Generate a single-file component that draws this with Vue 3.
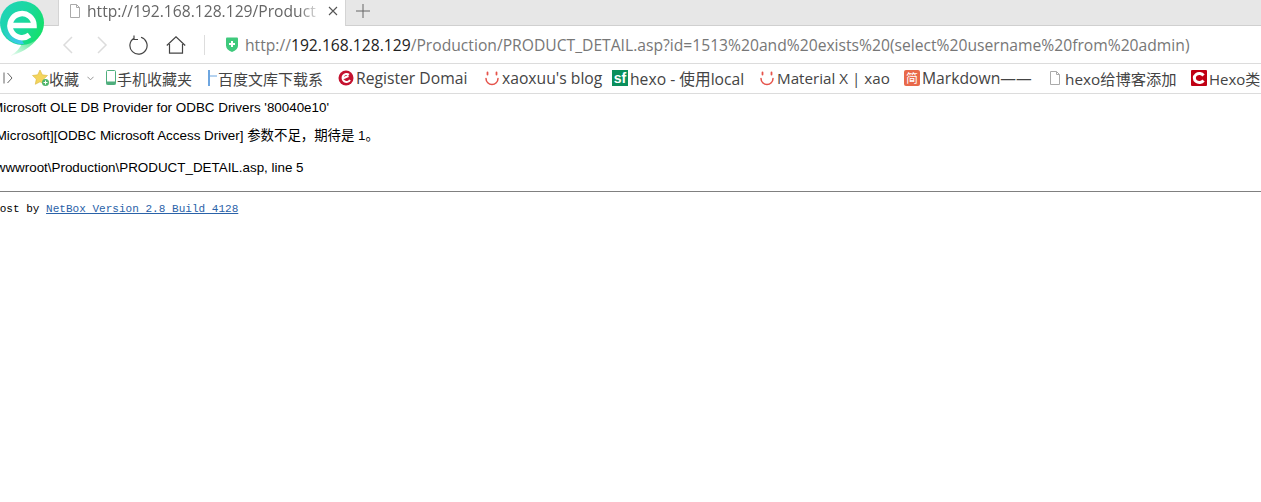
<script setup>
const bookmarks = [
  { id: 'fav', label: '收藏', icon: 'star', width: 74, latin: false },
  { id: 'mobile', label: '手机收藏夹', icon: 'phone', width: 102, latin: false },
  { id: 'baidu', label: '百度文库下载系', icon: 'wk', width: 130, latin: false },
  { id: 'reg', label: 'Register Domai', icon: 'reg', width: 146, latin: true },
  { id: 'blog', label: "xaoxuu's blog", icon: 'smile', width: 128, latin: true },
  { id: 'sf', label: 'hexo - 使用local', icon: 'sf', width: 147, latin: true },
  { id: 'mat', label: 'Material X | xao', icon: 'smile', width: 145, latin: true },
  { id: 'md', label: 'Markdown——', icon: 'jian', width: 145, latin: true },
  { id: 'hexo', label: 'hexo给博客添加', icon: 'doc', width: 142, latin: false },
  { id: 'hx', label: 'Hexo类', icon: 'c', width: 80, latin: false }
]
</script>

<template>
  <div class="page">
    <svg class="logo" viewBox="0 0 46 58" width="46" height="58">
      <defs>
        <linearGradient id="ring" x1="0" y1="0.2" x2="1" y2="0.6">
          <stop offset="0" stop-color="#1fd3b8"/>
          <stop offset="0.55" stop-color="#1ad8a0"/>
          <stop offset="1" stop-color="#14e06a"/>
        </linearGradient>
        <linearGradient id="blue" x1="0" y1="0" x2="0.6" y2="1">
          <stop offset="0" stop-color="#3cc8ea" stop-opacity="0"/>
          <stop offset="1" stop-color="#3cc8ea"/>
        </linearGradient>
        <linearGradient id="tail" x1="1" y1="0" x2="0" y2="1">
          <stop offset="0" stop-color="#16dd6c"/>
          <stop offset="1" stop-color="#16dd6c" stop-opacity="0.05"/>
        </linearGradient>
      </defs>
      <path d="M29 41L41 33 Q32 50 10 56 Q20 50 22 43z" fill="url(#tail)"/>
      <circle cx="22" cy="23" r="22" fill="url(#ring)"/>
      <path d="M3 30 A20 20 0 0 0 24 44 L20 37 Q10 33 8 24z" fill="url(#blue)"/>
      <path d="M11 25.500 H34 A12 12 0 1 0 29.500 35" fill="none" stroke="#fff" stroke-width="5.500"/>
    </svg>
    <div class="tabbar">
      <div class="tab-old"></div>
      <div class="tab">
        <svg class="page-ico" viewBox="0 0 12 14" width="12" height="14"><path d="M1.500.5h6l3 3v10h-9zM7.500.5v3h3" fill="#fff" stroke="#aaa"/></svg>
        <span class="tab-title">http://192.168.128.129/Product</span>
        <svg class="close" viewBox="0 0 10 10" width="10" height="10"><path d="M1 1l8 8M9 1l-8 8" stroke="#555" stroke-width="1.100"/></svg>
      </div>
      <svg class="plus" viewBox="0 0 14 14" width="14" height="14"><path d="M7 0v14M0 7h14" stroke="#666"/></svg>
    </div>
    <div class="navbar">
      <svg class="nav-ico back" viewBox="0 0 12 18" width="12" height="18"><path d="M10 1L2 9l8 8" fill="none" stroke="#dcdcdc" stroke-width="1.500"/></svg>
      <svg class="nav-ico fwd" viewBox="0 0 12 18" width="12" height="18"><path d="M2 1l8 8-8 8" fill="none" stroke="#dcdcdc" stroke-width="1.500"/></svg>
      <svg class="nav-ico reload" viewBox="0 0 20 20" width="20" height="20"><path d="M6 3.200A8.600 8.600 0 1 0 13 2.300M6 .5v4h4" fill="none" stroke="#444" stroke-width="1.200"/></svg>
      <svg class="nav-ico home" viewBox="0 0 20 18" width="20" height="18"><path d="M.8 9.500L10 .8l9.200 8.700M3.500 8v9.200h13V8" fill="none" stroke="#444" stroke-width="1.200"/></svg>
      <span class="sep"></span>
      <svg class="shield" viewBox="0 0 14 16" width="14" height="16"><path d="M1 1.500q0-1 1-1h10q1 0 1 1v7q0 4-6 6.500-6-2.500-6-6.500z" fill="#3ec97c"/><path d="M7 4v6M4 7h6" stroke="#fff" stroke-width="2"/></svg>
      <div class="url"><span class="dim">http://</span><span class="host">192.168.128.129</span><span class="dim">/Production/PRODUCT_DETAIL.asp?id=1513%20and%20exists%20(select%20username%20from%20admin)</span></div>
    </div>
    <div class="bookmarks">
      <svg class="more" viewBox="0 0 10 12" width="10" height="12"><path d="M1 .5v11M4.500 1l4.500 5-4.500 5" fill="none" stroke="#666"/></svg>
      <div v-for="b in bookmarks" :key="b.id" class="bm" :class="[{ latin: b.latin }, 'bm-' + b.id]" :style="{ width: b.width + 'px' }">
        <svg v-if="b.icon === 'star'" class="bi" viewBox="0 0 18 18" width="18" height="18"><path d="M8 1l2.300 4.800 5.200.7-3.800 3.600 1 5.200L8 12.800 3.300 15.300l1-5.200L.5 6.500l5.200-.7z" fill="#f4d55c" stroke="#d9b63c" stroke-width=".6"/><circle cx="13.500" cy="13.500" r="3.500" fill="#4fb56b"/><path d="M13.500 11.500v4M11.500 13.500h4" stroke="#fff"/></svg>
        <svg v-else-if="b.icon === 'phone'" class="bi" viewBox="0 0 10 16" width="10" height="16"><rect x=".5" y=".5" width="9" height="14" rx="1" fill="#fff" stroke="#4fae7d"/><rect x=".5" y="11.500" width="9" height="3" fill="#4fae7d"/></svg>
        <svg v-else-if="b.icon === 'wk'" class="bi" viewBox="0 0 9 16" width="9" height="16"><path d="M1 0v16" stroke="#4a90d9" stroke-width="1.600"/><path d="M2 6h7" stroke="#6aa5e0"/></svg>
        <svg v-else-if="b.icon === 'reg'" class="bi" viewBox="0 0 16 16" width="16" height="16"><circle cx="8" cy="8" r="7.500" fill="#c4122f"/><path d="M4.500 8.500l6-2.500M11 4.800A4 4 0 1 0 12 10" fill="none" stroke="#fff" stroke-width="2"/></svg>
        <svg v-else-if="b.icon === 'smile'" class="bi" viewBox="0 0 16 16" width="16" height="16"><path d="M2 8.500a6 6 0 0 0 12 0" fill="none" stroke="#e5534b" stroke-width="1.500" stroke-linecap="round"/><path d="M3.500 2.500v2M12.500 2.500v2" stroke="#e5534b" stroke-width="1.800" stroke-linecap="round"/></svg>
        <span v-else-if="b.icon === 'sf'" class="bi sf">sf</span>
        <span v-else-if="b.icon === 'jian'" class="bi jian">简</span>
        <svg v-else-if="b.icon === 'doc'" class="bi" viewBox="0 0 12 14" width="12" height="14"><path d="M1.500.5h6l3 3v10h-9zM7.500.5v3h3" fill="#fff" stroke="#aaa"/></svg>
        <svg v-else class="bi" viewBox="0 0 16 16" width="16" height="16"><rect width="16" height="16" rx="1" fill="#c00014"/><path d="M12.500 5.500A5 4.500 0 1 0 12.500 10.500" fill="none" stroke="#fff" stroke-width="3"/></svg>
        <span class="bm-label">{{ b.label }}</span>
        <svg v-if="b.id === 'fav'" class="caret" viewBox="0 0 8 5" width="7" height="5"><path d="M.5.5L4 4 7.500.5" fill="none" stroke="#888"/></svg>
      </div>
    </div>
    <div class="content">
      <p class="l1">Microsoft OLE DB Provider for ODBC Drivers '80040e10'</p>
      <p class="l2">[Microsoft][ODBC Microsoft Access Driver] 参数不足，期待是 1。</p>
      <p class="l3">\wwwroot\Production\PRODUCT_DETAIL.asp, line 5</p>
      <hr class="rule" />
      <p class="host-by">Host by <a class="link">NetBox Version 2.8 Build 4128</a></p>
    </div>
  </div>
</template>

<style scoped>
.page { width: 1261px; height: 502px; overflow: hidden; background: #fff; position: relative; font-family: "Liberation Sans", "Noto Sans CJK SC", sans-serif; }
.logo { position: absolute; left: 0; top: 0; z-index: 2; }
.tabbar { height: 25px; background: #e7e7e7; border-bottom: 1px solid #d0d0d0; display: flex; align-items: center; box-sizing: content-box; }
.tab-old { width: 58px; flex: none; }
.tab { width: 288px; height: 26px; background: #fff; border-left: 1px solid #d4d4d4; border-right: 1px solid #d4d4d4; box-sizing: border-box; display: flex; align-items: center; padding: 0 0 5px 10px; align-self: flex-start; flex: none; }
.page-ico { margin-right: 6px; flex: none; }
.tab-title { font: 15.650px "Open Sans", "Liberation Sans", sans-serif; color: #666; width: 235px; flex: none; white-space: nowrap; overflow: hidden; -webkit-mask-image: linear-gradient(to right, #000 90%, transparent); mask-image: linear-gradient(to right, #000 90%, transparent); }
.close { margin-left: 6px; flex: none; }
.plus { margin: -3px 0 0 10px; }
.navbar { height: 37px; display: flex; align-items: center; border-bottom: 1px solid #dcdcdc; box-sizing: content-box; background: #fff; }
.nav-ico { flex: none; }
.back { margin-left: 62px; }
.fwd { margin-left: 22px; }
.reload { margin-left: 20px; }
.home { margin-left: 18px; }
.sep { width: 1px; height: 20px; background: #ddd; margin-left: 18px; }
.shield { margin-left: 20px; flex: none; }
.url { margin-left: 6px; font: 15.670px "Open Sans", "Liberation Sans", sans-serif; white-space: nowrap; }
.dim { color: #777; }
.host { color: #222; }
.bookmarks { height: 28px; padding-bottom: 1px; display: flex; align-items: center; border-bottom: 1px solid #dcdcdc; white-space: nowrap; overflow: hidden; }
.more { margin-left: 3px; margin-right: 19px; flex: none; }
.bm { display: flex; align-items: center; flex: none; font: 15px "Open Sans", "Noto Sans CJK SC", sans-serif; color: #444; overflow: hidden; }
.bm.latin { font-size: 15.700px; }
.bm.bm-mat { font-size: 15.200px; }
.bm.bm-hexo { font-size: 15.300px; }
.bi { flex: none; margin-right: 2px; }
.bm-fav .bi { margin-right: -1px; }
.bm-mobile .bi, .bm-baidu .bi { margin-right: 1px; }
.bm-hexo .bi { margin-right: 4px; }
.bm-label { white-space: nowrap; }
.caret { margin-left: 8px; flex: none; }
.sf { width: 16px; height: 16px; background: #0a8f5c; color: #fff; font: bold 14px/16px "Liberation Sans", sans-serif; text-align: center; }
.jian { width: 16px; height: 16px; background: #e8694a; color: #fff; font: 12px/16px "Noto Sans CJK SC", sans-serif; text-align: center; border-radius: 2px; }
.content { margin-left: -8px; color: #000; font-size: 13.400px; line-height: 15px; }
.content p { margin: 0; white-space: nowrap; }
.l1 { padding-top: 6px; }
.content .l2 { margin-top: 13px; }
.content .l3 { margin-top: 17px; }
.rule { margin: 16px 0 0; border: none; border-top: 1px solid #808080; }
.content .host-by { margin-top: 10px; margin-left: 1px; font: 11.050px/14px "Liberation Mono", monospace; }
.link { color: #2a62a8; text-decoration: underline; }
</style>
